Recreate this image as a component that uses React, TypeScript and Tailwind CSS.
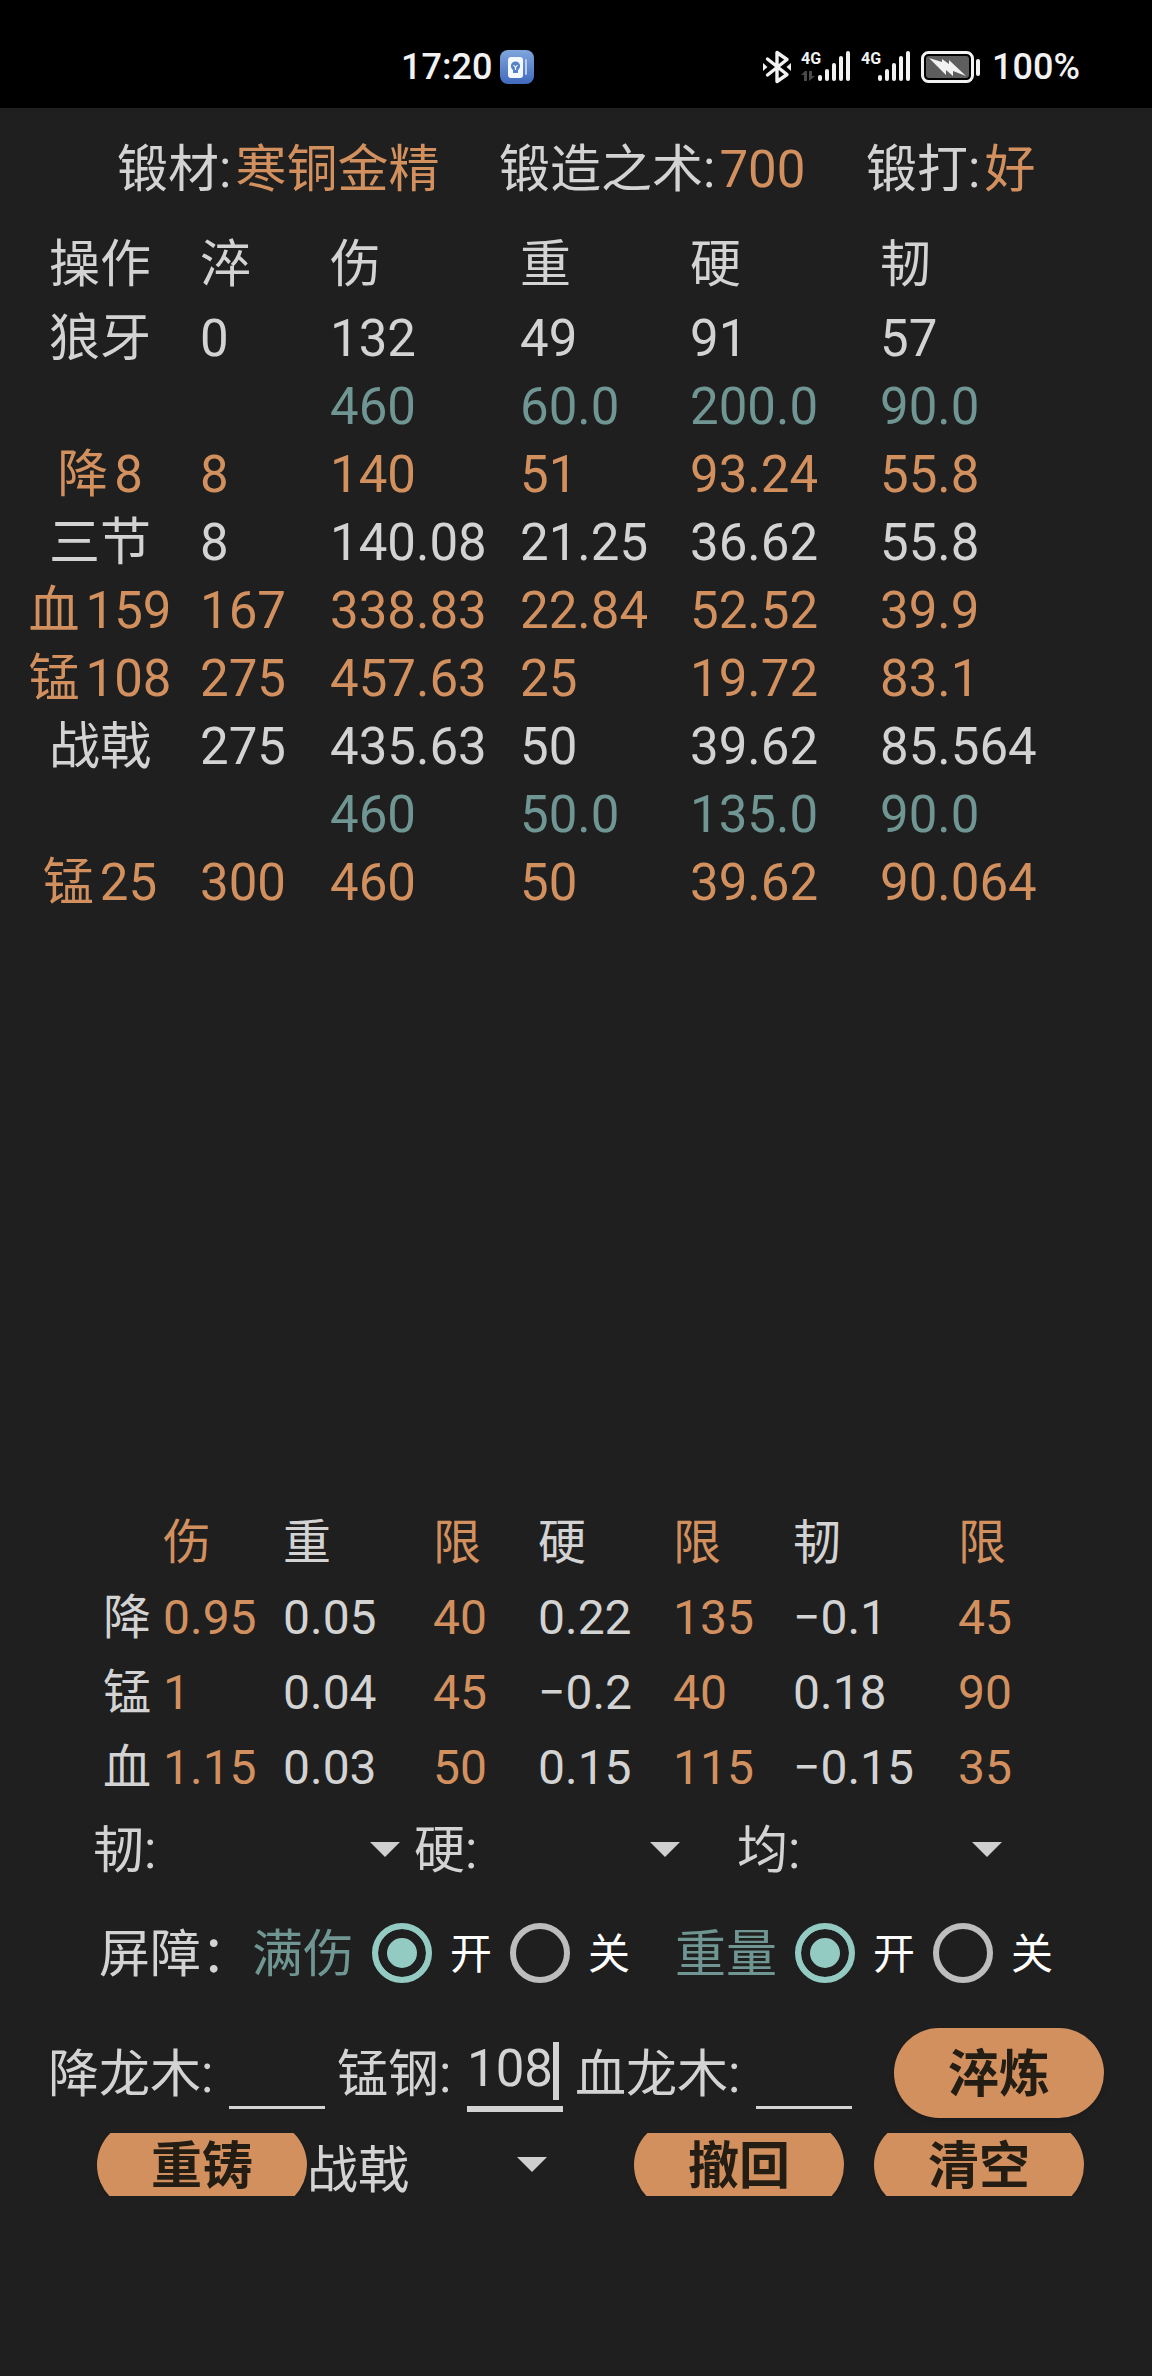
import { useState } from 'react';
import type { ReactNode } from 'react';

type Tone = 'plain' | 'accent' | 'target';

type ForgeStep = {
  name: string;
  count?: number;
  values: string[];
  tone: Tone;
};

const toneClass: Record<Tone, string> = {
  plain: 'text-[#d3d3d3]',
  accent: 'text-[#d3905f]',
  target: 'text-[#6f9692]',
};

const steps: ForgeStep[] = [
  { name: '狼牙', values: ['0', '132', '49', '91', '57'], tone: 'plain' },
  { name: '', values: ['', '460', '60.0', '200.0', '90.0'], tone: 'target' },
  { name: '降', count: 8, values: ['8', '140', '51', '93.24', '55.8'], tone: 'accent' },
  { name: '三节', values: ['8', '140.08', '21.25', '36.62', '55.8'], tone: 'plain' },
  { name: '血', count: 159, values: ['167', '338.83', '22.84', '52.52', '39.9'], tone: 'accent' },
  { name: '锰', count: 108, values: ['275', '457.63', '25', '19.72', '83.1'], tone: 'accent' },
  { name: '战戟', values: ['275', '435.63', '50', '39.62', '85.564'], tone: 'plain' },
  { name: '', values: ['', '460', '50.0', '135.0', '90.0'], tone: 'target' },
  { name: '锰', count: 25, values: ['300', '460', '50', '39.62', '90.064'], tone: 'accent' },
];

const rateColumns: { label: string; tone: Tone }[] = [
  { label: '伤', tone: 'accent' },
  { label: '重', tone: 'plain' },
  { label: '限', tone: 'accent' },
  { label: '硬', tone: 'plain' },
  { label: '限', tone: 'accent' },
  { label: '韧', tone: 'plain' },
  { label: '限', tone: 'accent' },
];

const rates = [
  { name: '降', values: ['0.95', '0.05', '40', '0.22', '135', '−0.1', '45'] },
  { name: '锰', values: ['1', '0.04', '45', '−0.2', '40', '0.18', '90'] },
  { name: '血', values: ['1.15', '0.03', '50', '0.15', '115', '−0.15', '35'] },
];

function Signal({ data = false }: { data?: boolean }) {
  return (
    <svg width="50" height="34" viewBox="0 0 50 34" fill="#f2f2f2">
      <text x="0" y="14" fontSize="16" fontWeight="700" fontFamily="Roboto, sans-serif">4G</text>
      {data && <path d="M4 21 L0 25 H3 V31 H6 V21 Z M8 21 V31 L14 26 H11 V21 Z" fill="#4a4a4a" />}
      <rect x="17" y="25" width="4" height="6" rx="2" />
      <rect x="24" y="19" width="4" height="12" rx="2" />
      <rect x="31" y="13" width="4" height="18" rx="2" />
      <rect x="38" y="6" width="4" height="25" rx="2" />
      <rect x="45" y="1" width="4" height="30" rx="2" />
    </svg>
  );
}

function StatusBar() {
  return (
    <header className="flex h-[108px] items-center bg-black pl-[401px] pr-[72px] pt-[26px] text-[36px] font-medium leading-none text-[#f2f2f2]">
      <span>17:20</span>
      <svg className="ml-2" width="34" height="34" viewBox="0 0 34 34">
        <defs>
          <linearGradient id="appIcon" x1="0" y1="0" x2="0" y2="1">
            <stop offset="0" stopColor="#7fa6dc" />
            <stop offset="1" stopColor="#4169bd" />
          </linearGradient>
        </defs>
        <rect width="34" height="34" rx="8" fill="url(#appIcon)" />
        <rect x="8" y="7" width="15" height="21" rx="3" fill="#f4f8ff" />
        <rect x="25" y="9" width="2" height="16" rx="1" fill="#b9cdf0" />
        <circle cx="15.5" cy="16" r="4.6" fill="#5581c6" />
        <path d="M13 19 h5 v4 h-5 z" fill="#5581c6" />
        <path d="M13.5 15 L15.5 17.5 L17.5 15 M15.5 17.5 V20" fill="none" stroke="#f4f8ff" strokeWidth="1.2" />
      </svg>

      <div className="ml-auto flex items-center gap-[10px]">
        <svg width="28" height="34" viewBox="0 0 28 34" fill="none" stroke="#f2f2f2" strokeWidth="3.4" strokeLinejoin="round" strokeLinecap="round">
          <path d="M4.5 9 L24 24.5 L14 31.5 V2.5 L24 9.5 L4.5 25" />
          <path d="M0 13 L4.5 17 L0 21 Z M28 13 L23.5 17 L28 21 Z" fill="#f2f2f2" stroke="none" />
        </svg>
        <Signal data />
        <Signal />
        <svg width="61" height="34" viewBox="0 0 61 34">
          <rect x="1.5" y="2.5" width="50" height="29" rx="6" fill="none" stroke="#f2f2f2" strokeWidth="3" />
          <rect x="5" y="6" width="43" height="22" rx="3" fill="#5e5e5e" />
          <path d="M8 8 L21 12 L21 9 L28 14 L28 10 L45 26 L32 21 L32 26 L25 20 L25 25 Z" fill="#f2f2f2" />
          <rect x="55" y="9" width="4" height="17" rx="2" fill="#f2f2f2" />
        </svg>
        <span>100%</span>
      </div>
    </header>
  );
}

function Stat({ label, value }: { label: string; value: string }) {
  return (
    <p className="flex gap-1">
      <span>{label}:</span>
      <span className="text-[#d3905f]">{value}</span>
    </p>
  );
}

function DropDown({ id, options, label }: { id: string; options: string[]; label?: string }) {
  return (
    <span className="relative flex min-w-0 flex-1 items-center">
      <select id={id} aria-label={label} className="h-[63px] w-full appearance-none bg-transparent pt-1 outline-none">
        {options.map((option) => (
          <option key={option}>{option}</option>
        ))}
      </select>
      <svg className="pointer-events-none absolute right-0" width="30" height="15" viewBox="0 0 30 15" fill="#cfcfcf">
        <path d="M0 0 H30 L15 15 Z" />
      </svg>
    </span>
  );
}

function Picker({ id, label, className }: { id: string; label: string; className: string }) {
  return (
    <div className={`flex items-center ${className}`}>
      <label htmlFor={id} className="pt-1">{label}:</label>
      <DropDown id={id} options={['']} />
    </div>
  );
}

function BarrierSwitch({ name, label }: { name: string; label: string }) {
  const [on, setOn] = useState(true);
  const radio =
    'size-[60px] shrink-0 appearance-none rounded-full border-[6px] border-[#bdbdbd] checked:border-[#93cbc3] checked:bg-[#93cbc3] checked:shadow-[inset_0_0_0_9px_#1f1f1f]';

  return (
    <div role="radiogroup" aria-label={label} className="flex items-center gap-[18px]">
      <span className="pt-1 text-[#6f9692]">{label}</span>
      <label className="flex items-center gap-[18px] text-[42px] text-white">
        <input type="radio" name={name} checked={on} onChange={() => setOn(true)} className={radio} />
        <span className="pt-1">开</span>
      </label>
      <label className="flex items-center gap-[18px] text-[42px] text-white">
        <input type="radio" name={name} checked={!on} onChange={() => setOn(false)} className={radio} />
        <span className="pt-1">关</span>
      </label>
    </div>
  );
}

function ActionButton({ children }: { children: ReactNode }) {
  return (
    <button
      type="button"
      className="h-[90px] w-[210px] shrink-0 rounded-full bg-[#d3905f] pt-1 font-bold text-[#241d14] shadow-md"
    >
      {children}
    </button>
  );
}

// The bottom row is shorter than its buttons, so they get clipped top and bottom
function ClippedButton({ children }: { children: ReactNode }) {
  return (
    <div className="flex h-[63px] shrink-0 items-center overflow-hidden">
      <ActionButton>{children}</ActionButton>
    </div>
  );
}

export default function App() {
  const [jiang, setJiang] = useState('');
  const [meng, setMeng] = useState('108');
  const [xue, setXue] = useState('');

  return (
    <div className="flex min-h-screen flex-col bg-[#1f1f1f] font-[Roboto,'Noto_Sans_CJK_SC',sans-serif] text-[51px] leading-[68px] text-[#d3d3d3]">
      <StatusBar />

      <main className="flex flex-1 flex-col pb-[180px]">
        <section className="grid h-[117px] grid-cols-[382px_367px_1fr] items-center whitespace-nowrap pl-[117px] pt-1.5">
          <Stat label="锻材" value="寒铜金精" />
          <Stat label="锻造之术" value="700" />
          <Stat label="锻打" value="好" />
        </section>

        {/* Forging history */}
        <section className="flex-1">
          <table className="w-full table-fixed text-left">
            <colgroup>
              <col className="w-[200px]" />
              <col className="w-[130px]" />
              <col className="w-[190px]" />
              <col className="w-[170px]" />
              <col className="w-[190px]" />
              <col />
            </colgroup>
            <thead>
              <tr className="h-20">
                <th className="p-0 text-center font-normal">操作</th>
                {['淬', '伤', '重', '硬', '韧'].map((head) => (
                  <th key={head} className="p-0 font-normal">{head}</th>
                ))}
              </tr>
            </thead>
            <tbody>
              {steps.map((step, row) => (
                <tr key={row} className={`h-[68px] ${toneClass[step.tone]}`}>
                  <td className="p-0">
                    <div className="flex justify-center gap-1.5">
                      <span>{step.name}</span>
                      {step.count && <span>{step.count}</span>}
                    </div>
                  </td>
                  {step.values.map((value, i) => (
                    <td key={i} className="p-0">{value}</td>
                  ))}
                </tr>
              ))}
            </tbody>
          </table>
        </section>

        {/* Material rates */}
        <section className="pl-[103px] text-[48px]">
          <table className="w-full table-fixed text-left">
            <colgroup>
              <col className="w-[60px]" />
              <col className="w-[120px]" />
              <col className="w-[150px]" />
              <col className="w-[105px]" />
              <col className="w-[135px]" />
              <col className="w-[120px]" />
              <col className="w-[165px]" />
              <col />
            </colgroup>
            <thead>
              <tr className="h-[75px]">
                <td className="p-0" />
                {rateColumns.map((column, i) => (
                  <th key={i} className={`p-0 font-normal ${toneClass[column.tone]}`}>{column.label}</th>
                ))}
              </tr>
            </thead>
            <tbody>
              {rates.map((rate) => (
                <tr key={rate.name} className="h-[75px]">
                  <th className="p-0 font-normal">{rate.name}</th>
                  {rate.values.map((value, i) => (
                    <td key={i} className={`p-0 ${toneClass[rateColumns[i].tone]}`}>{value}</td>
                  ))}
                </tr>
              ))}
            </tbody>
          </table>
        </section>

        <section className="flex h-[88px] items-center pl-[93px]">
          <Picker id="pick-ren" label="韧" className="w-[307px]" />
          <Picker id="pick-ying" label="硬" className="ml-[14px] w-[266px]" />
          <Picker id="pick-jun" label="均" className="ml-[57px] w-[265px]" />
        </section>

        <section className="flex h-[120px] items-center whitespace-nowrap pl-[99px]">
          <span className="pt-1">屏障：</span>
          <BarrierSwitch name="barrier-damage" label="满伤" />
          <div className="ml-[45px]">
            <BarrierSwitch name="barrier-weight" label="重量" />
          </div>
        </section>

        <section className="flex h-[120px] items-center whitespace-nowrap pl-[48px]">
          <label htmlFor="jiang" className="w-[181px] pt-1">降龙木:</label>
          <input
            id="jiang"
            value={jiang}
            onChange={(e) => setJiang(e.target.value)}
            className="h-[72px] w-24 border-b-[3px] border-[#d3d3d3] bg-transparent outline-none"
          />
          <label htmlFor="meng" className="ml-3 w-[130px] pt-1">锰钢:</label>
          <span className="relative flex">
            <input
              id="meng"
              value={meng}
              onChange={(e) => setMeng(e.target.value)}
              className="h-[78px] w-24 border-b-[6px] border-[#d3d3d3] bg-transparent pb-1 outline-none"
            />
            <span className="absolute right-1 top-2 h-[58px] w-1.5 bg-[#d3d3d3]" />
          </span>
          <label htmlFor="xue" className="ml-3 w-[181px] pt-1">血龙木:</label>
          <input
            id="xue"
            value={xue}
            onChange={(e) => setXue(e.target.value)}
            className="mr-[42px] h-[72px] w-24 border-b-[3px] border-[#d3d3d3] bg-transparent outline-none"
          />
          <ActionButton>淬炼</ActionButton>
        </section>

        <section className="flex items-center pl-[97px]">
          <ClippedButton>重铸</ClippedButton>
          <div className="mr-[87px] flex w-[240px]">
            <DropDown id="weapon" label="兵器" options={['战戟', '狼牙', '三节']} />
          </div>
          <ClippedButton>撤回</ClippedButton>
          <div className="ml-[30px]">
            <ClippedButton>清空</ClippedButton>
          </div>
        </section>
      </main>
    </div>
  );
}
